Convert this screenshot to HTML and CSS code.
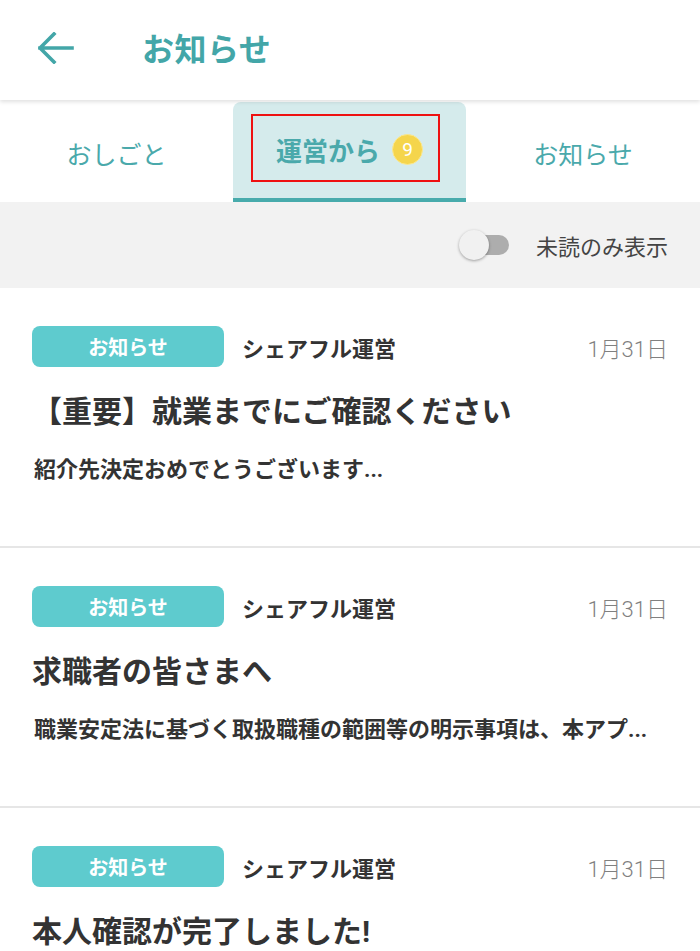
FILE: index.html
```html
<!DOCTYPE html>
<html lang="ja">
<head>
    <meta charset="UTF-8">
    <meta name="viewport" content="width=device-width, initial-scale=1.0">
    <title>お知らせ</title>
<link rel="stylesheet" href="styles.css">
</head>
<body>
    <header class="app-header">
        <svg class="back-icon" width="36" height="32" viewBox="0 0 36 32">
            <path d="M2 16 H34 M16 2 L2 16 L16 30" fill="none" stroke="#43a6a8" stroke-width="3.6" stroke-linecap="square" stroke-linejoin="miter"/>
        </svg>
        <h1>お知らせ</h1>
    </header>

    <!-- Tabs -->
    <nav class="tabs">
        <div class="tab">おしごと</div>
        <div class="tab active">
            運営から <span class="badge">9</span>
            <div class="mark"></div>
        </div>
        <div class="tab">お知らせ</div>
    </nav>

    <div class="filter-bar">
        <div class="switch"><div class="knob"></div></div>
        <span class="filter-label">未読のみ表示</span>
    </div>

    <div class="news-list">
        <div class="news-item">
            <div class="news-meta">
                <span class="tag">お知らせ</span>
                <span class="sender">シェアフル運営</span>
                <span class="date">1月31日</span>
            </div>
            <h2 class="news-title">【重要】就業までにご確認ください</h2>
            <p class="news-summary">紹介先決定おめでとうございます...</p>
        </div>

        <div class="news-item">
            <div class="news-meta">
                <span class="tag">お知らせ</span>
                <span class="sender">シェアフル運営</span>
                <span class="date">1月31日</span>
            </div>
            <h2 class="news-title">求職者の皆さまへ</h2>
            <p class="news-summary">職業安定法に基づく取扱職種の範囲等の明示事項は、本アプ...</p>
        </div>

        <div class="news-item">
            <div class="news-meta">
                <span class="tag">お知らせ</span>
                <span class="sender">シェアフル運営</span>
                <span class="date">1月31日</span>
            </div>
            <h2 class="news-title">本人確認が完了しました!</h2>
        </div>
    </div>
</body>
</html>
```

FILE: styles.css
```css
body {
    margin: 0;
    width: 700px;
    background-color: #fff;
    font-family: Roboto, "Noto Sans CJK JP", sans-serif;
    color: #333;
    overflow: hidden;
    height: 951px;
}

/* ヘッダー */
.app-header {
    height: 100px;
    display: flex;
    align-items: center;
    padding-left: 38px;
    box-shadow: 0 2px 4px rgba(0, 0, 0, 0.12);
    position: relative;
    z-index: 2;
}

.back-icon {
    display: block;
    margin-top: -4px;
}

.app-header h1 {
    margin: -6px 0 0 68px;
    font-size: 32px;
    font-weight: bold;
    color: #43a6a8;
    letter-spacing: 0.5px;
}

/* タブ */
.tabs {
    display: grid;
    grid-template-columns: 233px 233px 234px;
    height: 100px;
    margin-top: 2px;
}

.tab {
    display: flex;
    justify-content: center;
    align-items: center;
    font-size: 25px;
    color: #4aa9ab;
    padding-top: 2px;
    box-sizing: border-box;
}

.tab.active {
    position: relative;
    background-color: #d5ebec;
    border-radius: 8px 8px 0 0;
    border-bottom: 4px solid #48abac;
    font-weight: bold;
    font-size: 26px;
    padding-top: 0;
    padding-bottom: 2px;
}

.badge {
    display: inline-flex;
    justify-content: center;
    align-items: center;
    width: 31px;
    height: 31px;
    margin-left: 12px;
    border-radius: 50%;
    background-color: #f5d54c;
    border: 1px solid #fbe88f;
    box-sizing: border-box;
    color: #fff;
    font-size: 19px;
    font-weight: normal;
}

/* 赤い枠 */
.mark {
    position: absolute;
    left: 18px;
    top: 12px;
    width: 185px;
    height: 64px;
    border: 2px solid #ee1111;
}

/* フィルター */
.filter-bar {
    height: 86px;
    background-color: #f2f2f2;
    display: flex;
    justify-content: flex-end;
    align-items: center;
    padding-right: 32px;
}

.switch {
    position: relative;
    width: 46px;
    height: 20px;
    border-radius: 10px;
    background-color: #adadad;
    margin-right: 27px;
}

.knob {
    position: absolute;
    left: -4px;
    top: -5px;
    width: 30px;
    height: 30px;
    border-radius: 50%;
    background-color: #f1f1f1;
    box-shadow: 0 1px 3px rgba(0, 0, 0, 0.35);
}

.filter-label {
    font-size: 22px;
    color: #444;
}

/* リスト */
.news-item {
    height: 220px;
    padding: 38px 32px 0 32px;
    border-bottom: 2px solid #e6e6e6;
}

.news-meta {
    display: flex;
    align-items: center;
    height: 41px;
}

.tag {
    width: 192px;
    height: 41px;
    border-radius: 8px;
    background-color: #5ecbce;
    color: #fff;
    font-size: 20px;
    font-weight: bold;
    display: flex;
    justify-content: center;
    align-items: center;
}

.sender {
    margin-left: 18px;
    font-size: 22px;
    font-weight: bold;
    color: #333;
    flex: 1;
}

.date {
    font-size: 22px;
    font-weight: 300;
    color: #808080;
}

.news-title {
    margin: 25px 0 0 0;
    font-size: 30px;
    font-weight: bold;
    color: #333;
    line-height: 40px;
}

.news-summary {
    margin: 24px 0 0 2px;
    font-size: 22px;
    font-weight: bold;
    color: #333;
    line-height: 28px;
    white-space: nowrap;
    overflow: hidden;
}
```
